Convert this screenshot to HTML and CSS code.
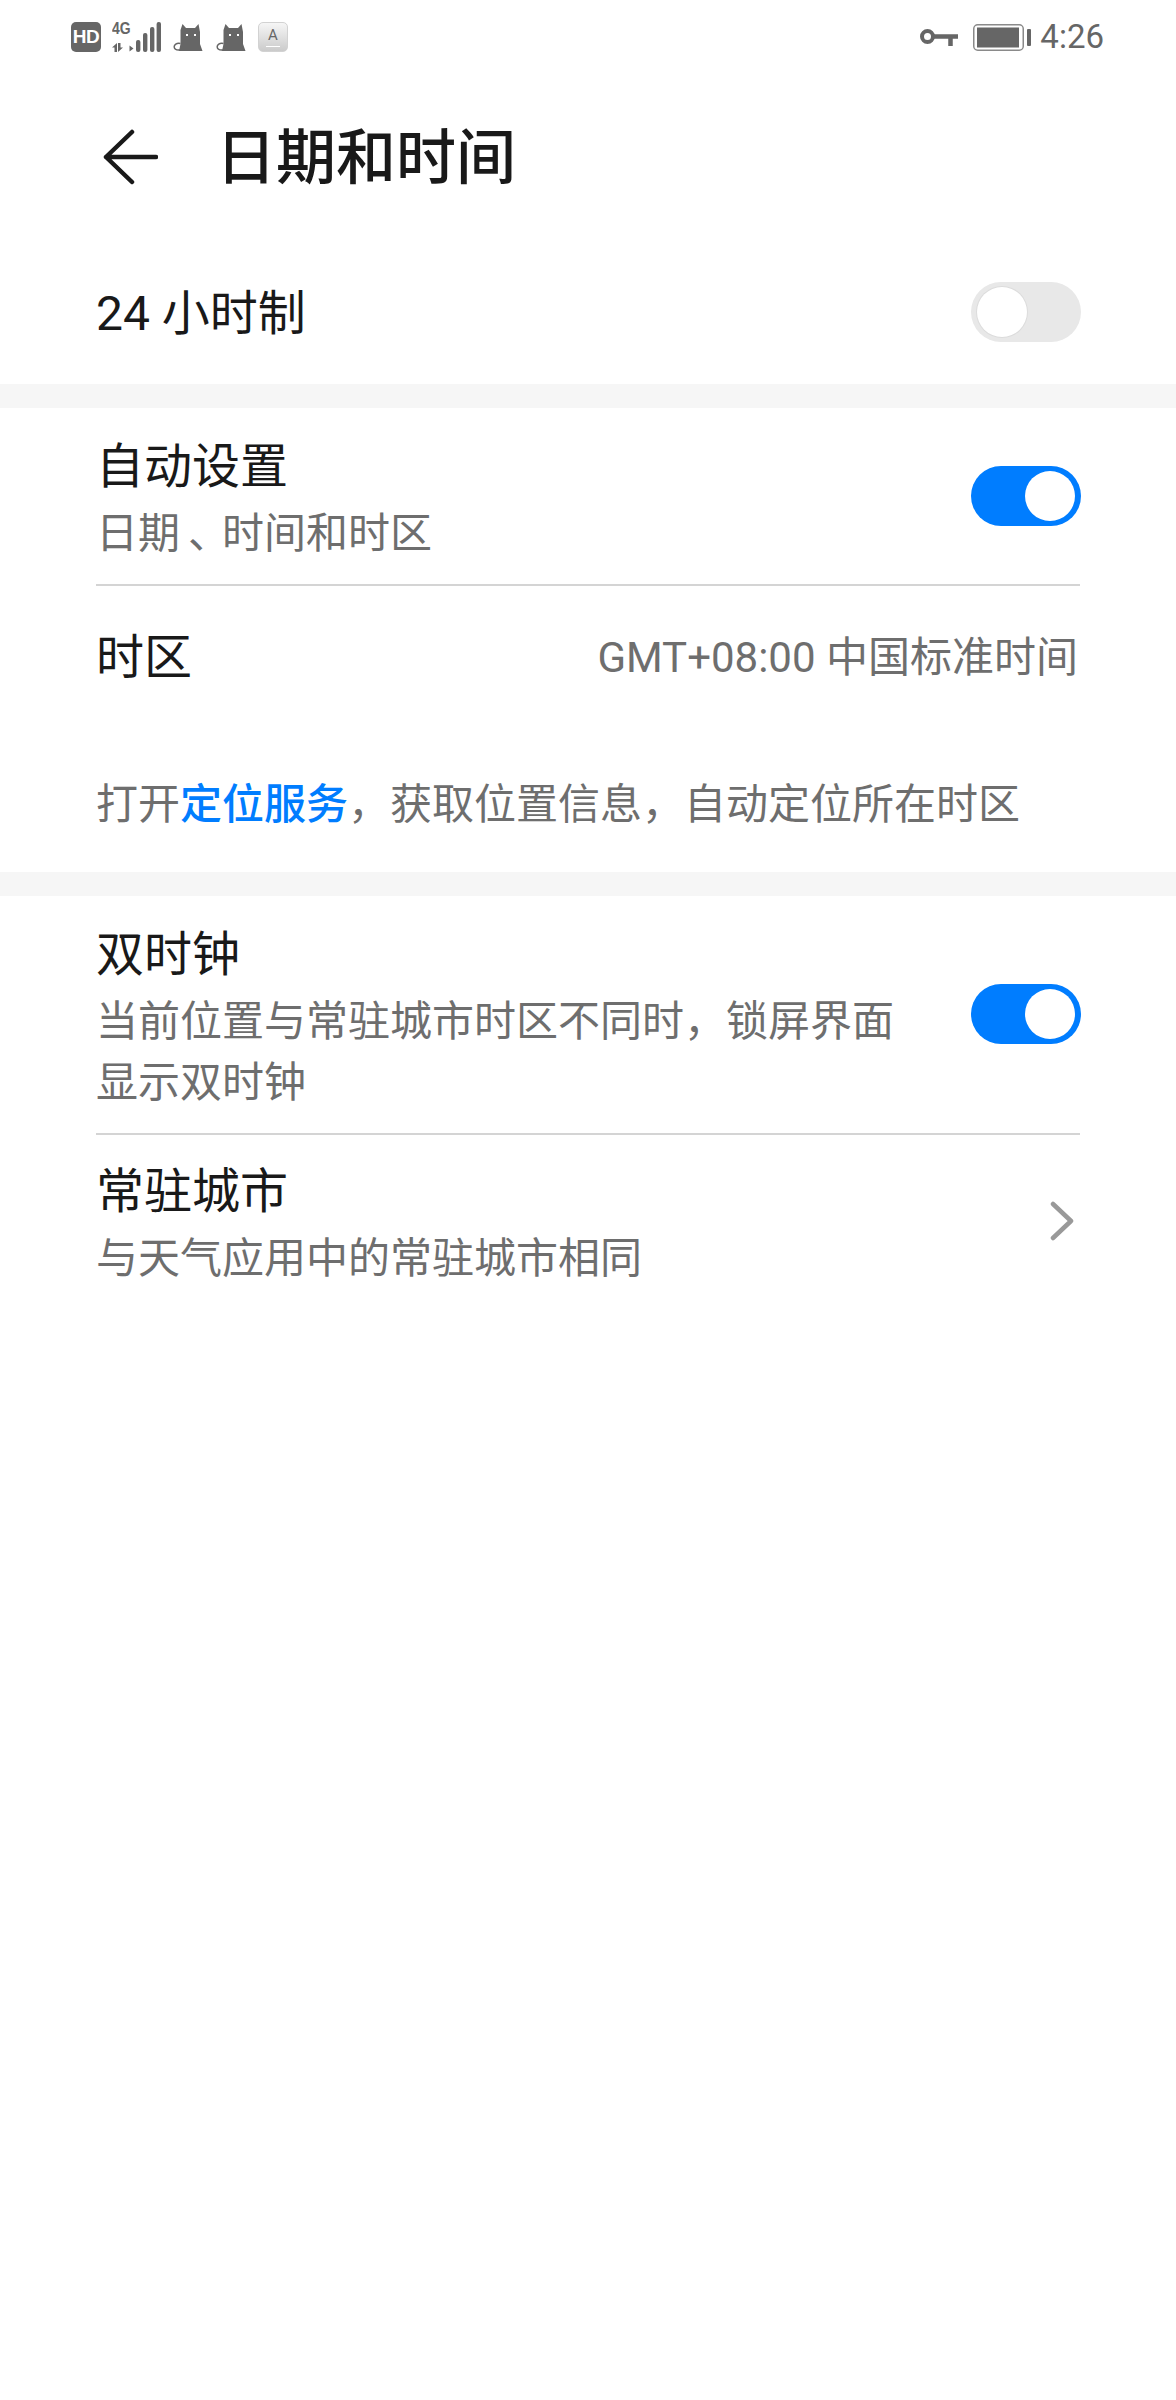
FILE: index.html
```html
<!DOCTYPE html>
<html lang="zh-CN">
<head>
<meta charset="utf-8">
<title>日期和时间</title>
<link rel="stylesheet" href="styles.css">
</head>
<body>
<div class="screen">
  <div class="status">
    <div class="status-group">
      <span class="hd">HD</span>
      <span class="net">
        <span class="net-labels"><span class="net-4g">4G</span>
          <svg class="net-arrows" width="22" height="9" viewBox="0 0 22 9"><path d="M0 4.500 5 0V9H2.500V4.500ZM6 0H8.500V4.500H11L6 9ZM17.500 2.500 21.500 5.500 17.500 8.500Z" fill="#666"/></svg>
        </span>
        <svg class="net-bars" width="25" height="30" viewBox="0 0 25 30"><g fill="#666"><rect x="0" y="18" width="4.400" height="12" rx="2"/><rect x="7" y="11" width="4.400" height="19" rx="2"/><rect x="14" y="5" width="4.400" height="25" rx="2"/><rect x="20.600" y="0" width="4.400" height="30" rx="2"/></g></svg>
      </span>
      <svg class="cat" width="30" height="27" viewBox="0 0 30 27"><path d="M9.500 0 13 4H22L25.500 0 27 8V20L29.500 27H6L7.500 20V6Z" fill="#666"/><path d="M7.500 19.500C3.500 18.500 1 21 1.200 23 1.500 25.500 4 26.300 7 26" fill="none" stroke="#666" stroke-width="1.500"/><rect x="13" y="10" width="2" height="2" fill="#fff"/><rect x="21" y="10" width="2" height="2" fill="#fff"/></svg>
      <svg class="cat" width="30" height="27" viewBox="0 0 30 27"><path d="M9.500 0 13 4H22L25.500 0 27 8V20L29.500 27H6L7.500 20V6Z" fill="#666"/><path d="M7.500 19.500C3.500 18.500 1 21 1.200 23 1.500 25.500 4 26.300 7 26" fill="none" stroke="#666" stroke-width="1.500"/><rect x="13" y="10" width="2" height="2" fill="#fff"/><rect x="21" y="10" width="2" height="2" fill="#fff"/></svg>
      <span class="keytile"><span class="keyletter">A</span></span>
    </div>
    <div class="status-group">
      <svg class="key" width="38" height="17" viewBox="0 0 38 17"><circle cx="7.500" cy="7.500" r="5.500" fill="none" stroke="#666" stroke-width="4"/><path d="M13 7.500H38M30.500 7.500V17" fill="none" stroke="#666" stroke-width="4.500"/></svg>
      <svg class="battery" width="58" height="27" viewBox="0 0 58 27"><rect x="0.750" y="0.750" width="49.500" height="25.500" rx="4" fill="none" stroke="#8a8a8a" stroke-width="1.500"/><rect x="4" y="3.500" width="42" height="20" fill="#666"/><rect x="54" y="5" width="4" height="17" rx="1" fill="#666"/></svg>
      <span class="clock">4:26</span>
    </div>
  </div>

  <header class="appbar">
    <svg class="back" width="56" height="56" viewBox="0 0 56 56"><path d="M30 3 4 28 30 53M4 28H54" fill="none" stroke="#191919" stroke-width="4.500" stroke-linecap="round" stroke-linejoin="round"/></svg>
    <h1 class="title">日期和时间</h1>
  </header>

  <section class="group group-first">
    <div class="row row-single">
      <div class="row-text"><div class="label">24 小时制</div></div>
      <span class="switch"><span class="knob"></span></span>
    </div>
  </section>

  <div class="gap"></div>

  <section class="group">
    <div class="row row-double">
      <div class="row-text">
        <div class="label">自动设置</div>
        <div class="sub">日期<span class="comma">、</span>时间和时区</div>
      </div>
      <span class="switch on"><span class="knob"></span></span>
    </div>
    <div class="divider"></div>
    <div class="row row-zone">
      <div class="label">时区</div>
      <div class="value">GMT+08:00 中国标准时间</div>
    </div>
    <p class="hint">打开<span class="link">定位服务</span>，获取位置信息，自动定位所在时区</p>
  </section>

  <div class="gap"></div>

  <section class="group">
    <div class="row row-triple">
      <div class="row-text">
        <div class="label">双时钟</div>
        <div class="sub narrow">当前位置与常驻城市时区不同时，锁屏界面显示双时钟</div>
      </div>
      <span class="switch on"><span class="knob"></span></span>
    </div>
    <div class="divider"></div>
    <div class="row row-city">
      <div class="row-text">
        <div class="label">常驻城市</div>
        <div class="sub">与天气应用中的常驻城市相同</div>
      </div>
      <svg class="chevron" width="24" height="40" viewBox="0 0 24 40"><path d="M3 3 21 20 3 37" fill="none" stroke="#999" stroke-width="4.500" stroke-linecap="round" stroke-linejoin="round"/></svg>
    </div>
  </section>
</div>
</body>
</html>
```
FILE: styles.css
```css
* { box-sizing: border-box; }
html, body { margin: 0; padding: 0; background: #fff; }
body { font-family: Roboto, "Noto Sans CJK SC", sans-serif; color: #191919; }
.screen { width: 1176px; height: 2400px; background: #fff; overflow: hidden; }

.status { height: 74px; padding: 0 72px 0 71px; display: flex; justify-content: space-between; align-items: center; }
.status-group { display: flex; align-items: center; }
.hd { width: 30px; height: 30px; border-radius: 5px; background: #666; color: #fff; font: 700 19px/30px "Liberation Sans", sans-serif; text-align: center; letter-spacing: -0.5px; margin-right: 11px; }
.net { display: flex; align-items: flex-end; height: 30px; margin-right: 12px; }
.net-labels { display: flex; flex-direction: column; justify-content: space-between; width: 24px; height: 30px; }
.net-4g { font: 700 17px/13px "Liberation Sans", sans-serif; color: #666; transform: scaleX(0.82); transform-origin: left; }
.net-arrows { display: block; }
.net-bars { display: block; }
.cat { display: block; margin-right: 13px; }
.cat + .cat { margin-right: 12px; }
.keytile { width: 30px; height: 30px; border-radius: 5px; background: linear-gradient(#f6f6f6, #cbcbcb); border: 1px solid #d2d2d2; color: #666; text-align: center; }
.keyletter { display: block; width: 14px; margin: 0 auto; font: 400 15px/20px Roboto, sans-serif; padding-top: 2px; height: 24px; border-bottom: 1px solid #fff; }
.key { display: block; margin-right: 15px; }
.battery { display: block; margin-right: 9px; }
.clock { font-size: 33px; line-height: 40px; color: #666; }

.appbar { height: 170px; display: flex; align-items: center; padding: 0 0 0 102px; }
.back { display: block; margin: 0 58px 4px 0; }
.title { margin: 0; font-size: 60px; font-weight: 500; line-height: 80px; color: #191919; }

.group { padding: 0 96px; }
.group-first { padding-bottom: 4px; }
.gap { height: 24px; background: #f6f6f6; }
.row { display: flex; align-items: center; justify-content: space-between; }
.row-single { height: 136px; }
.row-text { padding-top: 3px; }
.row-double { height: 176px; }
.row-zone { height: 144px; }
.row-triple { height: 237px; }
.row-triple .switch { margin-bottom: 2px; }
.row-city { height: 172px; }
.label { font-size: 48px; line-height: 72px; color: #191919; }
.sub { font-size: 42px; line-height: 61px; color: #6e6e6e; }
.comma { font-feature-settings: "halt"; padding: 0 13px 0 8px; }
.narrow { width: 820px; }
.value { font-size: 42px; line-height: 60px; color: #6e6e6e; margin-right: 2px; }
.divider { height: 2px; background: #d4d4d4; }
.hint { margin: 0; height: 142px; padding-top: 45px; font-size: 42px; line-height: 60px; color: #6e6e6e; }
.link { color: #007dff; font-weight: 500; }

.switch { display: block; flex: none; width: 110px; height: 60px; border-radius: 30px; background: #e8e8e8; padding: 5px 6px; margin-right: -1px; }
.knob { display: block; width: 50px; height: 50px; border-radius: 50%; background: #fff; box-shadow: 0 0 0 1px #dcdcdc; }
.switch.on { background: #007dff; }
.switch.on .knob { margin-left: 48px; box-shadow: none; }
.chevron { display: block; margin-right: 6px; }
```
